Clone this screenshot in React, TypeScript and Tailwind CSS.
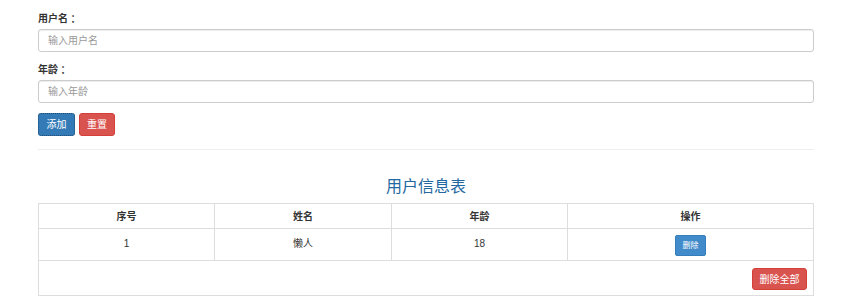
export default function App() {
  const font = { fontFamily: '"Liberation Sans", "Noto Sans CJK SC", sans-serif' }
  const users = [{ id: 1, name: '懒人', age: 18 }]

  return (
    <div className="min-h-[306px] bg-white text-[#333]" style={font}>
      <div className="w-[776px] ml-[38px] pt-[11px]">
        {/* Form */}
        <div className="mb-[10px]">
          <label className="flex items-center h-[14px] text-[10px] font-bold mb-[4px]">
            用户名<span className="font-['Noto_Sans_CJK_JP',sans-serif]">：</span>
          </label>
          <input
            className="block w-full h-[23px] px-[9px] text-[10px] border border-[#ccc] rounded-[3px] shadow-[inset_0_1px_1px_rgba(0,0,0,0.075)] placeholder:text-[#999] outline-none"
            placeholder="输入用户名"
          />
        </div>
        <div className="mb-[10px]">
          <label className="flex items-center h-[14px] text-[10px] font-bold mb-[4px]">
            年龄<span className="font-['Noto_Sans_CJK_JP',sans-serif]">：</span>
          </label>
          <input
            className="block w-full h-[23px] px-[9px] text-[10px] border border-[#ccc] rounded-[3px] shadow-[inset_0_1px_1px_rgba(0,0,0,0.075)] placeholder:text-[#999] outline-none"
            placeholder="输入年龄"
          />
        </div>
        <div className="flex gap-[4px]">
          <button className="h-[23px] w-[37px] text-[10px] text-white bg-[#337ab7] border border-dotted border-[#204d74] rounded-[3px]">
            添加
          </button>
          <button className="h-[23px] w-[36px] text-[10px] text-white bg-[#d9534f] border border-[#d43f3a] rounded-[3px]">
            重置
          </button>
        </div>
        <hr className="mt-[13px] border-0 border-t border-[#eee]" />

        {/* Table */}
        <h2 className="text-center text-[16px] leading-[20px] text-[#23689f] mt-[27px] mb-[6px]">用户信息表</h2>
        <table className="w-full border-collapse border border-[#ddd] text-[10px]">
          <thead>
            <tr className="h-[25px]">
              <th className="w-[176px] border border-[#ddd] font-bold">序号</th>
              <th className="w-[177px] border border-[#ddd] font-bold">姓名</th>
              <th className="w-[176px] border border-[#ddd] font-bold">年龄</th>
              <th className="border border-[#ddd] font-bold">操作</th>
            </tr>
          </thead>
          <tbody>
            {users.map(u => (
              <tr key={u.id} className="h-[32px]">
                <td className="border border-[#ddd] text-center align-top pt-[7px]">{u.id}</td>
                <td className="border border-[#ddd] text-center align-top pt-[7px]">{u.name}</td>
                <td className="border border-[#ddd] text-center align-top pt-[7px]">{u.age}</td>
                <td className="border border-[#ddd] text-center">
                  <button className="h-[21px] w-[31px] text-[8px] text-white bg-[#428bca] border border-[#357ebd] rounded-[2px] mt-[2px]">
                    删除
                  </button>
                </td>
              </tr>
            ))}
            <tr className="h-[35px]">
              <td colSpan={4} className="border border-[#ddd] text-right pr-[6px]">
                <button className="h-[22px] w-[55px] text-[10px] text-white bg-[#d9534f] border border-[#d43f3a] rounded-[3px] mt-[2px]">
                  删除全部
                </button>
              </td>
            </tr>
          </tbody>
        </table>
      </div>
    </div>
  )
}
